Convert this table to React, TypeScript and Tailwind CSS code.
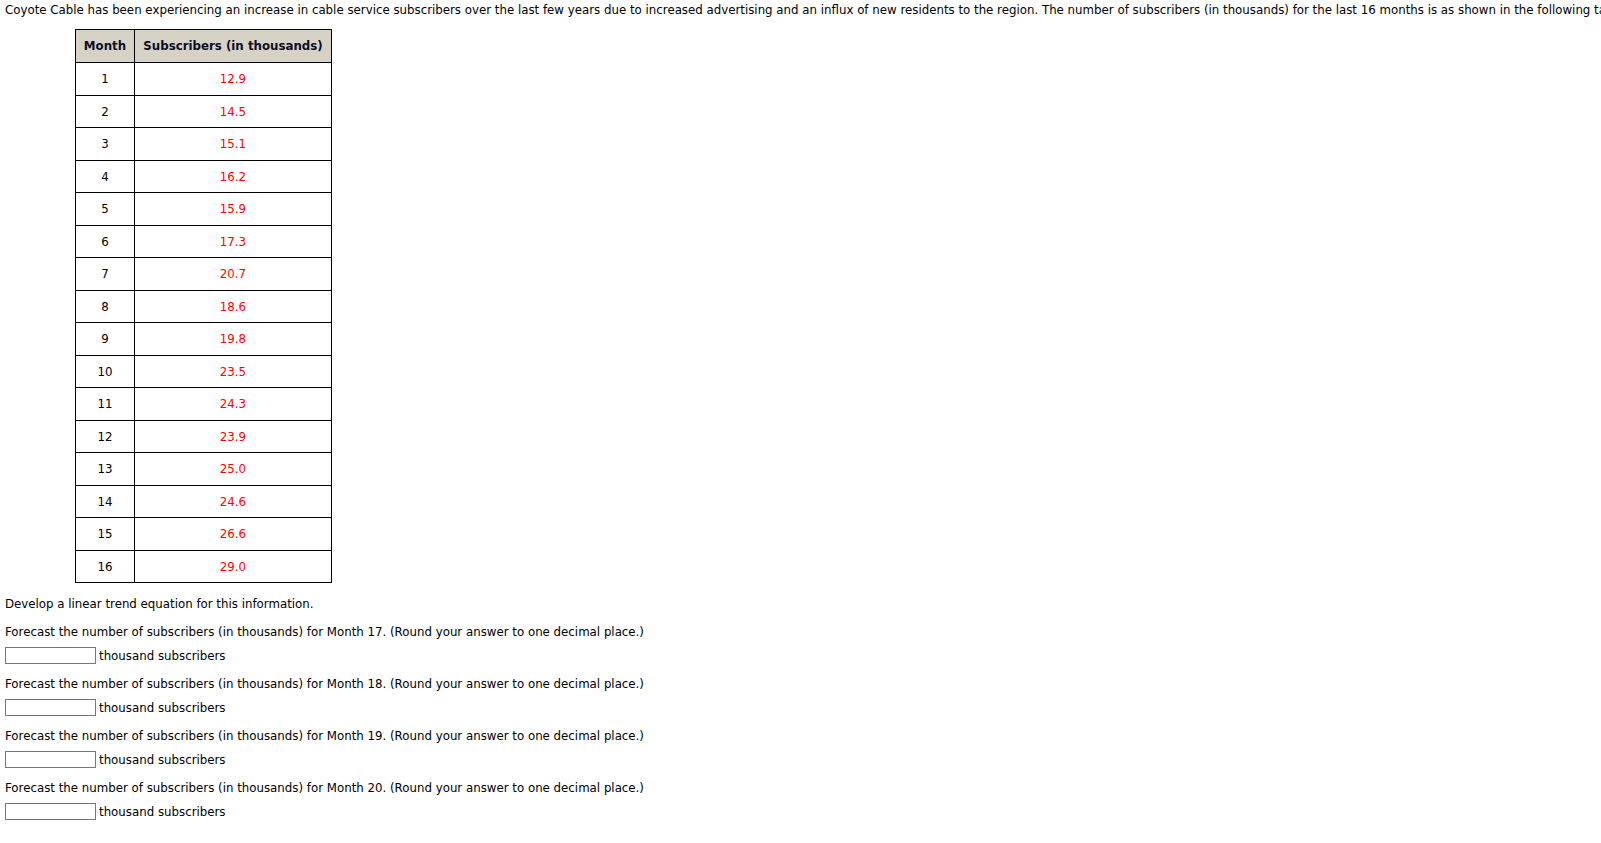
import React from 'react';

const rows: [number, string][] = [
  [1, '12.9'],
  [2, '14.5'],
  [3, '15.1'],
  [4, '16.2'],
  [5, '15.9'],
  [6, '17.3'],
  [7, '20.7'],
  [8, '18.6'],
  [9, '19.8'],
  [10, '23.5'],
  [11, '24.3'],
  [12, '23.9'],
  [13, '25.0'],
  [14, '24.6'],
  [15, '26.6'],
  [16, '29.0'],
];

const months = [17, 18, 19, 20];

const App: React.FC = () => {
  return (
    <div
      className="w-[1601px] h-[843px] overflow-hidden bg-white text-black whitespace-nowrap px-[5px] pt-[2px] text-[11.8px] leading-[16px]"
      style={{ fontFamily: '"DejaVu Sans", Verdana, sans-serif' }}
    >
      <p>
        Coyote Cable has been experiencing an increase in cable service subscribers over the last few years due to increased
        advertising and an influx of new residents to the region. The number of subscribers (in thousands) for the last 16 months is
        as shown in the following table.
      </p>

      {/* data table */}
      <table className="ml-[70px] mt-[11px] w-[257px] table-fixed border-collapse border border-black">
        <thead>
          <tr className="bg-[#d6d2c6] text-[#0d0d26]">
            <th className="w-[59px] h-[33px] border border-black font-bold text-center">Month</th>
            <th className="h-[33px] border border-black font-bold text-center">Subscribers (in thousands)</th>
          </tr>
        </thead>
        <tbody>
          {rows.map(([m, v]) => (
            <tr key={m} className={m % 2 === 1 ? 'h-[33px]' : 'h-[32px]'}>
              <td className="border border-black text-center">{m}</td>
              <td className="border border-black text-center text-[#f00]">{v}</td>
            </tr>
          ))}
        </tbody>
      </table>

      <p className="mt-[13px]">Develop a linear trend equation for this information.</p>

      {months.map((m) => (
        <div key={m}>
          <p className="mt-[12px]">
            Forecast the number of subscribers (in thousands) for Month {m}. (Round your answer to one decimal place.)
          </p>
          <div className="mt-[7px] flex items-center h-[17px]">
            <input
              type="text"
              className="w-[91px] h-[17px] border border-[#767676] bg-white outline-none"
            />
            <span className="ml-[3px]">thousand subscribers</span>
          </div>
        </div>
      ))}
    </div>
  );
};

export default App;
